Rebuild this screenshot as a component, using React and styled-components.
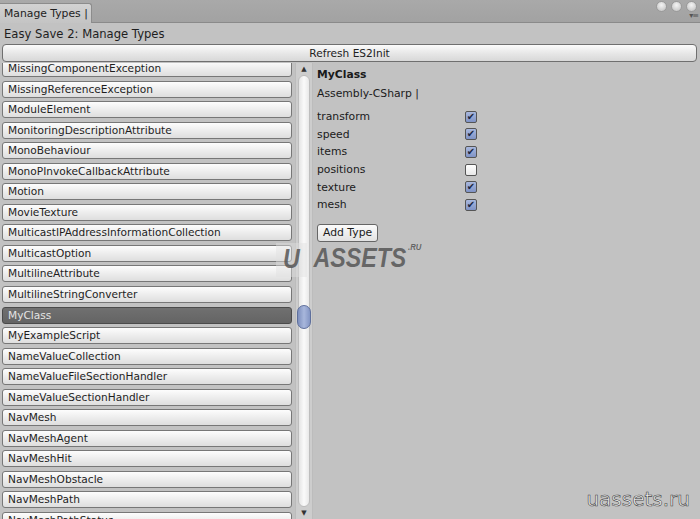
import React from "react"
import styled, { createGlobalStyle } from "styled-components"

const GlobalStyle = createGlobalStyle`
  html, body {
    margin: 0;
    padding: 0;
    background: #c2c2c2;
    font-family: "DejaVu Sans", "Liberation Sans", sans-serif;
  }
  * { box-sizing: border-box; }
`

const types = [
  "MissingComponentException",
  "MissingReferenceException",
  "ModuleElement",
  "MonitoringDescriptionAttribute",
  "MonoBehaviour",
  "MonoPInvokeCallbackAttribute",
  "Motion",
  "MovieTexture",
  "MulticastIPAddressInformationCollection",
  "MulticastOption",
  "MultilineAttribute",
  "MultilineStringConverter",
  "MyClass",
  "MyExampleScript",
  "NameValueCollection",
  "NameValueFileSectionHandler",
  "NameValueSectionHandler",
  "NavMesh",
  "NavMeshAgent",
  "NavMeshHit",
  "NavMeshObstacle",
  "NavMeshPath",
  "NavMeshPathStatus",
]

const fields = [
  { name: "transform", on: true },
  { name: "speed", on: true },
  { name: "items", on: true },
  { name: "positions", on: false },
  { name: "texture", on: true },
  { name: "mesh", on: true },
]

const App = () => {
  return (
    <Window>
      <GlobalStyle />
      <TabBar>
        <Tab>Manage Types |</Tab>
        <WindowControls>
          <Dot />
          <Dot />
          <Dot />
          <MenuGlyph>▾≡</MenuGlyph>
        </WindowControls>
      </TabBar>
      <Title>Easy Save 2: Manage Types</Title>
      <RefreshButton>Refresh ES2Init</RefreshButton>
      <Body>
        <ListViewport>
          <List>
            {types.map((t) => (
              <TypeItem key={t} $selected={t === "MyClass"}>
                {t}
              </TypeItem>
            ))}
          </List>
        </ListViewport>
        <Scrollbar>
          <Arrow>▲</Arrow>
          <Track>
            <Thumb />
          </Track>
          <Arrow>▼</Arrow>
        </Scrollbar>
        <Detail>
          <ClassName>MyClass</ClassName>
          <Assembly>Assembly-CSharp |</Assembly>
          <FieldList>
            {fields.map((f) => (
              <FieldRow key={f.name}>
                <span>{f.name}</span>
                <Check $on={f.on}>{f.on ? "✔" : ""}</Check>
              </FieldRow>
            ))}
          </FieldList>
          <AddButton>Add Type</AddButton>
        </Detail>
      </Body>
      <Watermark>
        <WmU>U</WmU>
        <span>ASSETS</span>
        <WmRu>.RU</WmRu>
      </Watermark>
      <SiteMark>uassets.ru</SiteMark>
    </Window>
  )
}
export default App

const Window = styled.div`
  position: relative;
  width: 700px;
  height: 519px;
  overflow: hidden;
  background: #c2c2c2;
  display: flex;
  flex-direction: column;
  color: #1a1a1a;
`

const TabBar = styled.div`
  height: 23px;
  flex: none;
  display: flex;
  align-items: flex-end;
  justify-content: space-between;
  background: linear-gradient(#a9a9a9, #a2a2a2);
  border-bottom: 1px solid #8a8a8a;
`

const Tab = styled.div`
  height: 20px;
  width: 92px;
  margin-bottom: -1px;
  padding: 3px 0 0 4px;
  background: linear-gradient(#d2d2d2, #c4c4c4);
  border: 1px solid #8c8c8c;
  border-bottom: none;
  border-left: none;
  border-radius: 0 3px 0 0;
  font-size: 10.8px;
  color: #222;
  white-space: nowrap;
`

const WindowControls = styled.div`
  position: relative;
  align-self: stretch;
  display: flex;
  gap: 4px;
  padding: 1px 3px 0 0;
`

const Dot = styled.div`
  width: 11px;
  height: 11px;
  border-radius: 50%;
  background: radial-gradient(circle at 50% 35%, #f4f4f4, #bdbdbd);
  border: 1px solid #9a9a9a;
`

const MenuGlyph = styled.div`
  position: absolute;
  right: 2px;
  top: 11px;
  font-size: 8px;
  color: #555;
  letter-spacing: -1px;
`

const Title = styled.div`
  height: 21px;
  flex: none;
  padding: 4px 0 0 4px;
  font-size: 11.6px;
  color: #1e1e1e;
`

const RefreshButton = styled.div`
  flex: none;
  height: 18px;
  margin: 0 3px 0 2px;
  border: 1px solid #6f6f6f;
  border-radius: 4px;
  background: linear-gradient(#fbfbfb, #e6e6e6 55%, #d8d8d8);
  font-size: 10.6px;
  line-height: 16px;
  text-align: center;
  color: #222;
`

const Body = styled.div`
  flex: 1;
  min-height: 0;
  display: flex;
  padding-top: 1px;
`

const ListViewport = styled.div`
  width: 295px;
  flex: none;
  overflow: hidden;
  padding-left: 2px;
`

const List = styled.div`
  display: flex;
  flex-direction: column;
  gap: 3.55px;
  margin-top: -3px;
`

const TypeItem = styled.div`
  width: 290px;
  height: 17px;
  flex: none;
  padding-left: 5px;
  border: 1px solid ${(p) => (p.$selected ? "#4a4a4a" : "#777")};
  border-radius: 3px;
  background: ${(p) =>
    p.$selected
      ? "linear-gradient(#707070, #646464)"
      : "linear-gradient(#fdfdfd, #ededed 50%, #dedede)"};
  color: ${(p) => (p.$selected ? "#e4e4e4" : "#1e1e1e")};
  font-size: 10.6px;
  line-height: 15px;
  white-space: nowrap;
`

const Scrollbar = styled.div`
  width: 18px;
  flex: none;
  display: flex;
  flex-direction: column;
  align-items: center;
  background: #cdcdcd;
  border-left: 1px solid #bcbcbc;
  border-right: 1px solid #bcbcbc;
`

const Arrow = styled.div`
  flex: none;
  height: 12px;
  font-size: 7px;
  line-height: 12px;
  color: #333;
`

const Track = styled.div`
  position: relative;
  flex: 1;
  width: 12px;
  border-radius: 6px;
  background: linear-gradient(90deg, #e4e4e4, #fafafa 50%, #e8e8e8);
  border: 1px solid #bdbdbd;
`

const Thumb = styled.div`
  position: absolute;
  left: -2px;
  top: 229px;
  width: 14px;
  height: 24px;
  border-radius: 7px;
  background: linear-gradient(90deg, #7d8fbd, #a8b7dc 50%, #8395c4);
  border: 1px solid #5e6f9c;
`

const Detail = styled.div`
  flex: 1;
  padding: 5px 0 0 4px;
  display: flex;
  flex-direction: column;
  align-items: flex-start;
`

const ClassName = styled.div`
  font-size: 10.8px;
  font-weight: bold;
  height: 19px;
`

const Assembly = styled.div`
  font-size: 10.8px;
  height: 18px;
`

const FieldList = styled.div`
  margin-top: 3px;
  width: 160px;
  display: flex;
  flex-direction: column;
`

const FieldRow = styled.div`
  height: 17.6px;
  display: flex;
  align-items: center;
  justify-content: space-between;
  font-size: 10.8px;
`

const Check = styled.div`
  width: 12px;
  height: 12px;
  border: 1px solid #555;
  border-radius: 2px;
  background: ${(p) =>
    p.$on
      ? "linear-gradient(#a9b8de, #7f93c6)"
      : "linear-gradient(#ffffff, #e8e8e8)"};
  font-size: 10px;
  line-height: 10px;
  text-align: center;
  color: #1b2740;
`

const AddButton = styled.div`
  margin-top: 10px;
  height: 18px;
  padding: 0 5px;
  border: 1px solid #666;
  border-radius: 3px;
  background: linear-gradient(#fbfbfb, #e2e2e2);
  font-size: 10.8px;
  line-height: 16px;
`

const Watermark = styled.div`
  position: absolute;
  left: 276px;
  top: 243px;
  display: flex;
  align-items: flex-start;
  gap: 8px;
  font-size: 27px;
  font-weight: bold;
  font-style: italic;
  color: rgba(85, 85, 85, 0.85);
  font-family: "Liberation Sans", sans-serif;
  white-space: nowrap;
  transform: scaleX(0.86);
  transform-origin: left top;
`

const WmU = styled.span`
  display: inline-block;
  padding: 1px 8px 2px;
  background: rgba(225, 225, 225, 0.45);
`

const WmRu = styled.span`
  font-size: 9px;
  margin-left: -6px;
  margin-top: -1px;
`

const SiteMark = styled.div`
  position: absolute;
  right: 10px;
  bottom: 8px;
  font-size: 20px;
  font-family: "DejaVu Sans", sans-serif;
  color: #f2f2f2;
  -webkit-text-stroke: 0.6px #444;
`
